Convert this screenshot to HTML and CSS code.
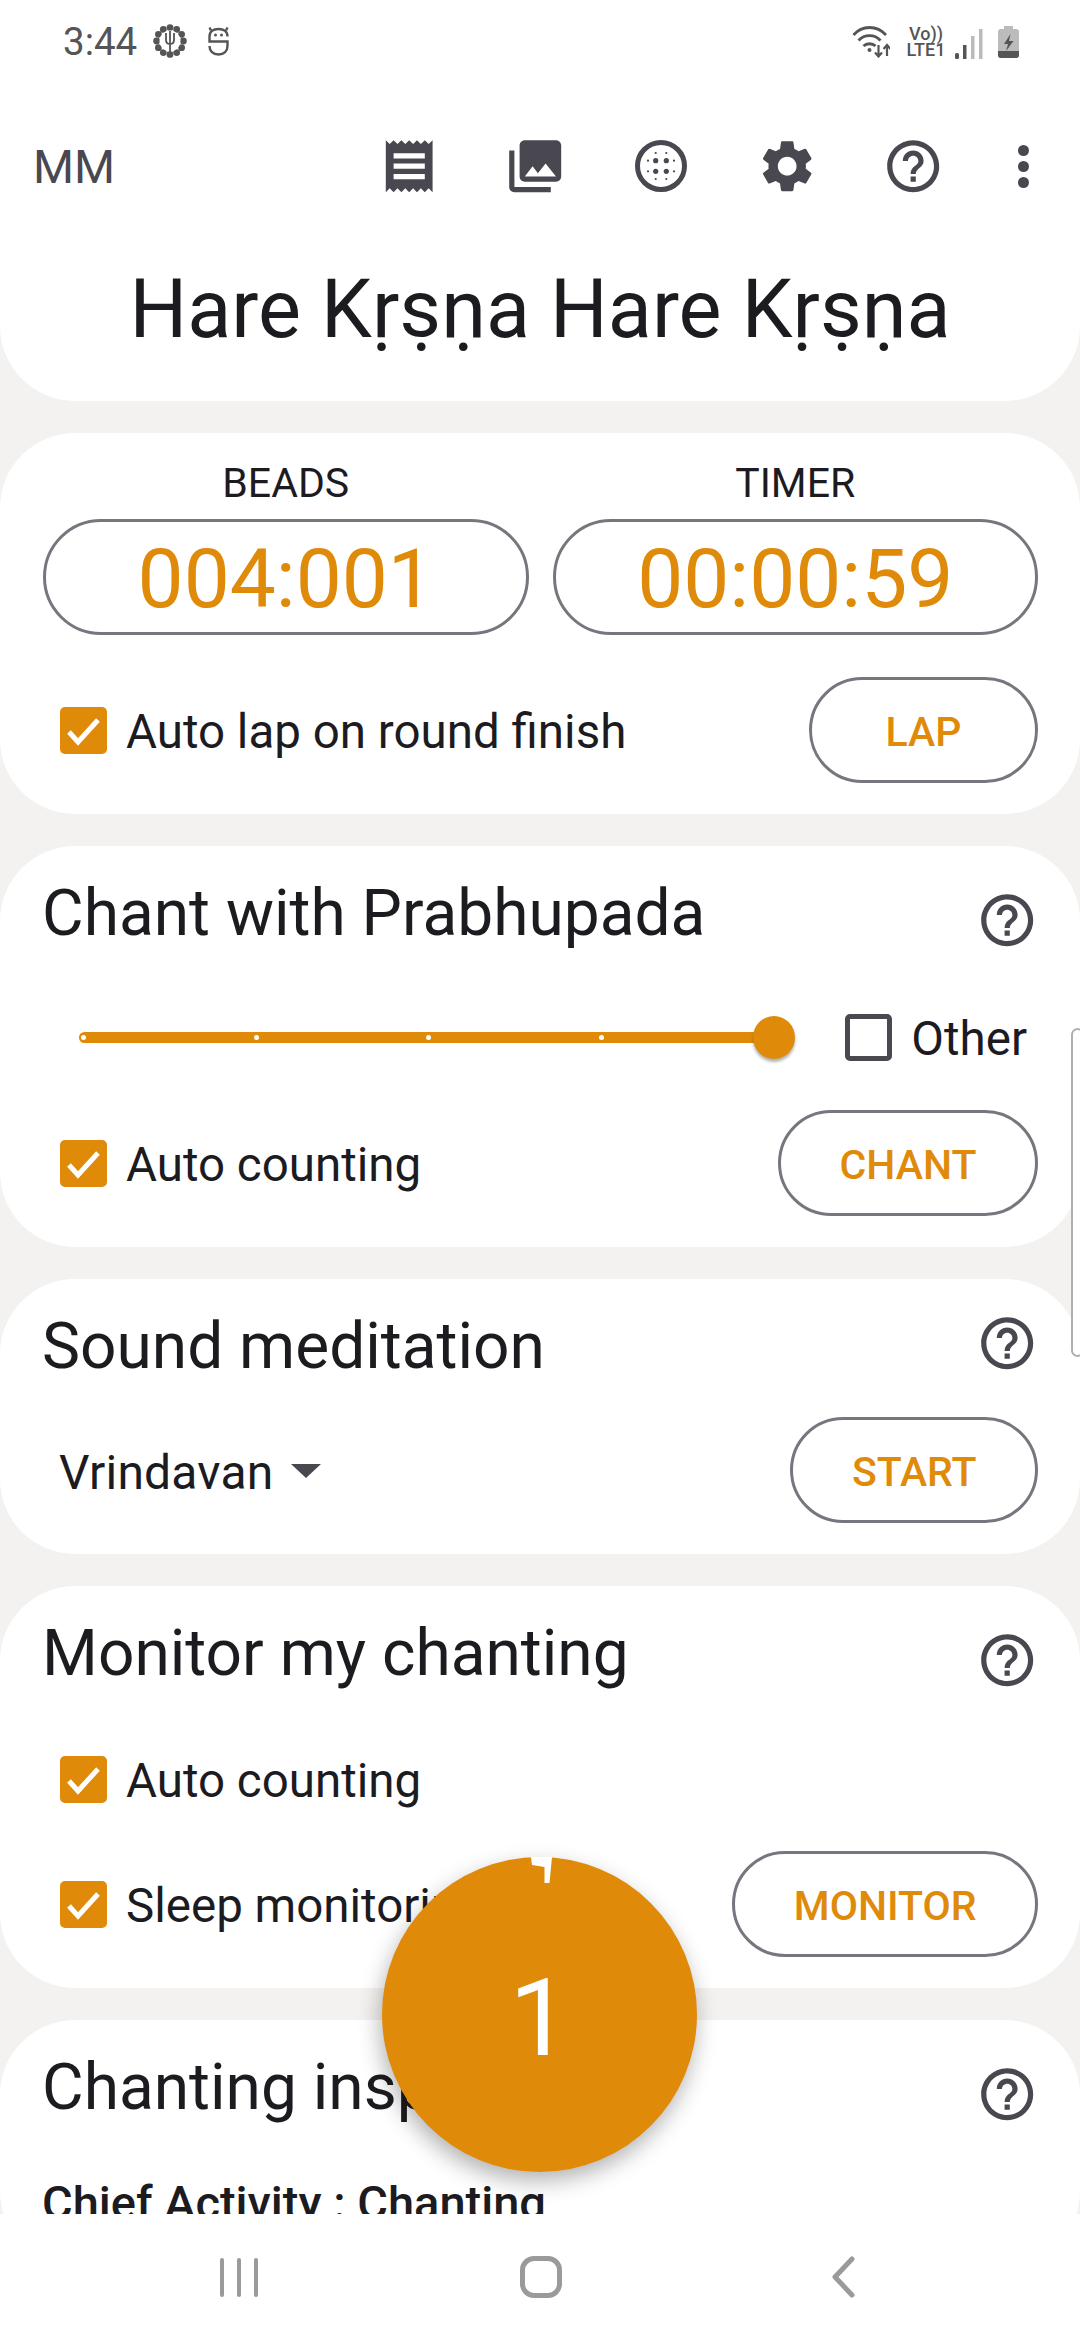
FILE: index.html
```html
<!DOCTYPE html>
<html lang="en">
<head>
<meta charset="utf-8">
<title>Japa counter</title>
<link rel="stylesheet" href="styles.css">
</head>
<body>
<svg class="defs" width="0" height="0" aria-hidden="true">
  <symbol id="help" viewBox="0 0 24 24"><path d="M11 18h2v-2h-2v2zm1-16C6.48 2 2 6.48 2 12s4.48 10 10 10 10-4.48 10-10S17.52 2 12 2zm0 18c-4.41 0-8-3.59-8-8s3.59-8 8-8 8 3.59 8 8-3.59 8-8 8zm0-14c-2.21 0-4 1.79-4 4h2c0-1.1.9-2 2-2s2 .9 2 2c0 2-3 1.75-3 5h2c0-2.25 3-2.5 3-5 0-2.21-1.79-4-4-4z"/></symbol>
  <symbol id="tick" viewBox="0 0 47 47"><path d="M9 25l9 10 20-22" fill="none" stroke="#fff" stroke-width="5"/></symbol>
</svg>
<div class="app">
  <header class="head">
    <div class="status">
      <span class="time">3:44</span>
      <svg class="st-beads" width="34" height="34" viewBox="0 0 34 34">
        <g fill="#555"><circle cx="17" cy="3.6" r="3.4"/><circle cx="23.7" cy="5.4" r="3.4"/><circle cx="28.6" cy="10.3" r="3.4"/><circle cx="30.4" cy="17" r="3.4"/><circle cx="28.6" cy="23.7" r="3.4"/><circle cx="23.7" cy="28.6" r="3.4"/><circle cx="17" cy="30.4" r="3.4"/><circle cx="10.3" cy="28.6" r="3.4"/><circle cx="5.4" cy="23.7" r="3.4"/><circle cx="3.6" cy="17" r="3.4"/><circle cx="5.4" cy="10.3" r="3.4"/><circle cx="10.3" cy="5.4" r="3.4"/></g>
        <circle cx="17" cy="17" r="10.500" fill="#fff"/>
        <path d="M13 9v7c0 3 1.800 4 4 4s4-1 4-4V9M17 7v21" fill="none" stroke="#555" stroke-width="1.800"/>
      </svg>
      <svg class="st-face" width="23" height="30" viewBox="0 0 23 30">
        <path d="M20.500 10.500C20.500 5.500 17 3 11.500 3S2.500 5.500 2.500 10.500V15.500H20.500V20C20.500 25 17 28.500 11.500 28.500S2.500 25 2.500 20" fill="none" stroke="#555" stroke-width="2.400"/>
        <path d="M4 4.500L2.500 1.500M19 4.500L20.500 1.500" stroke="#555" stroke-width="2.400"/>
        <circle cx="8.500" cy="9" r="1.500" fill="#555"/><circle cx="14.500" cy="9" r="1.500" fill="#555"/>
      </svg>
      <span class="status-fill"></span>
      <svg class="st-wifi" width="38" height="32" viewBox="0 0 38 32">
        <path d="M1.500 9C10-1 25-1 34 9M6.500 14.500c6-6.500 16-6.500 22 0M11.500 20c3-3 9-3 12 0" fill="none" stroke="#555" stroke-width="2.800"/>
        <circle cx="17.500" cy="24" r="2" fill="#555"/>
        <path d="M26.500 19v11M23 26.500l3.500 4 3.500-4M35 30V19M31.500 23l3.500-4 3.500 4" fill="none" stroke="#555" stroke-width="2.200"/>
      </svg>
      <span class="net"><span>Vo))</span><span>LTE1</span></span>
      <svg class="st-signal" width="28" height="30" viewBox="0 0 28 30">
        <rect x="0" y="24" width="4" height="6" rx="1.500" fill="#555"/>
        <rect x="8" y="16" width="3.500" height="14" fill="#555"/>
        <rect x="16" y="7" width="3.500" height="23" fill="#bbb"/>
        <rect x="24" y="0" width="3.500" height="30" fill="#bbb"/>
      </svg>
      <svg class="st-batt" width="21" height="32" viewBox="0 0 21 32">
        <path d="M6 0h9v3h3c2 0 3 1 3 3v23c0 2-1 3-3 3H3c-2 0-3-1-3-3V6c0-2 1-3 3-3h3z" fill="#bbb"/>
        <path d="M0 25h21v4c0 2-1 3-3 3H3c-2 0-3-1-3-3z" fill="#555"/>
        <path d="M12.500 8L6 18h4l-2 7 7.500-10h-4.500z" fill="#555"/>
      </svg>
    </div>
    <div class="toolbar">
      <span class="mm">MM</span>
      <span class="tool-fill"></span>
      <span class="tool"><svg class="ic" viewBox="0 0 24 24"><path fill-rule="evenodd" d="M18 17H6v-2h12v2zm0-4H6v-2h12v2zm0-4H6V7h12v2zM3 22l1.500-1.500L6 22l1.500-1.500L9 22l1.500-1.500L12 22l1.500-1.500L15 22l1.500-1.500L18 22l1.500-1.500L21 22V2l-1.500 1.500L18 2l-1.500 1.500L15 2l-1.500 1.500L12 2l-1.500 1.500L9 2 7.500 3.500 6 2 4.500 3.500 3 2v20z"/></svg></span>
      <span class="tool"><svg class="ic" viewBox="0 0 24 24"><path d="M22 16V4c0-1.100-.9-2-2-2H8c-1.100 0-2 .9-2 2v12c0 1.100.9 2 2 2h12c1.100 0 2-.9 2-2zm-11-4l2.030 2.710L16 11l4 5H8l3-4zM2 6v14c0 1.100.9 2 2 2h14v-2H4V6H2z"/></svg></span>
      <span class="tool"><svg class="ic-52" viewBox="0 0 52 52">
        <circle cx="26" cy="26" r="23.500" fill="none" stroke="#49474f" stroke-width="5"/>
        <g fill="#49474f"><circle cx="20.700" cy="20.700" r="2.600"/><circle cx="31.300" cy="20.700" r="2.600"/><circle cx="20.700" cy="31.300" r="2.600"/><circle cx="31.300" cy="31.300" r="2.600"/>
        <circle cx="20.700" cy="13" r="1.100"/><circle cx="31.300" cy="13" r="1.100"/><circle cx="20.700" cy="39" r="1.100"/><circle cx="31.300" cy="39" r="1.100"/><circle cx="13" cy="20.700" r="1.100"/><circle cx="39" cy="20.700" r="1.100"/><circle cx="13" cy="31.300" r="1.100"/><circle cx="39" cy="31.300" r="1.100"/></g>
      </svg></span>
      <span class="tool"><svg class="ic" viewBox="0 0 24 24"><path fill-rule="evenodd" d="M19.140 12.940c.04-.3.06-.61.06-.94 0-.32-.02-.64-.07-.94l2.030-1.580c.18-.14.23-.41.12-.61l-1.920-3.320c-.12-.22-.37-.29-.59-.22l-2.390.96c-.5-.38-1.030-.7-1.620-.94l-.36-2.540c-.04-.24-.24-.41-.48-.41h-3.840c-.24 0-.43.17-.47.41l-.36 2.540c-.59.24-1.130.57-1.620.94l-2.390-.96c-.22-.08-.47 0-.59.22L2.740 8.870c-.12.21-.08.47.12.61l2.030 1.580c-.05.3-.09.63-.09.94s.02.64.07.94l-2.030 1.580c-.18.14-.23.41-.12.61l1.920 3.320c.12.22.37.29.59.22l2.390-.96c.5.38 1.030.7 1.620.94l.36 2.540c.05.24.24.41.48.41h3.840c.24 0 .44-.17.47-.41l.36-2.540c.59-.24 1.130-.56 1.620-.94l2.390.96c.22.08.47 0 .59-.22l1.920-3.320c.12-.22.07-.47-.12-.61l-2.010-1.580zM12 15.600c-1.980 0-3.600-1.620-3.600-3.600s1.620-3.600 3.600-3.600 3.600 1.620 3.600 3.600-1.620 3.600-3.600 3.600z"/></svg></span>
      <span class="tool"><svg class="ic"><use href="#help"/></svg></span>
      <span class="tool tool-more"><span class="dots"><i></i><i></i><i></i></span></span>
    </div>
    <h1 class="mantra">Hare Kṛṣṇa Hare Kṛṣṇa</h1>
  </header>

  <main class="scroll">
    <section class="card">
      <div class="labels"><span>BEADS</span><span>TIMER</span></div>
      <div class="pills"><span class="pill">004:001</span><span class="pill">00:00:59</span></div>
      <div class="action act-lap">
        <label class="check"><span class="box on"><svg><use href="#tick"/></svg></span>Auto lap on round finish</label>
        <button class="btn btn-lap">LAP</button>
      </div>
    </section>

    <section class="card">
      <div class="title-row"><h2>Chant with Prabhupada</h2><svg class="ic help"><use href="#help"/></svg></div>
      <div class="slider-row">
        <div class="track"><i></i><i></i><i></i><i></i><b class="thumb"></b></div>
        <label class="check check-other"><span class="box off"></span>Other</label>
      </div>
      <div class="action act-chant">
        <label class="check"><span class="box on"><svg><use href="#tick"/></svg></span>Auto counting</label>
        <button class="btn">CHANT</button>
      </div>
    </section>

    <section class="card">
      <div class="title-row"><h2>Sound meditation</h2><svg class="ic help help-high"><use href="#help"/></svg></div>
      <div class="action act-start">
        <span class="drop">Vrindavan<i class="caret"></i></span>
        <button class="btn">START</button>
      </div>
    </section>

    <section class="card">
      <div class="title-row"><h2>Monitor my chanting</h2><svg class="ic help"><use href="#help"/></svg></div>
      <div class="solo"><label class="check"><span class="box on"><svg><use href="#tick"/></svg></span>Auto counting</label></div>
      <div class="action act-monitor">
        <label class="check"><span class="box on"><svg><use href="#tick"/></svg></span>Sleep monitoring</label>
        <button class="btn">MONITOR</button>
      </div>
    </section>

    <section class="card">
      <div class="title-row"><h2>Chanting inspiration</h2><svg class="ic help"><use href="#help"/></svg></div>
      <p class="quote">Chief Activity : Chanting</p>
    </section>
  </main>

  <nav class="nav">
    <span class="nav-cell"><span class="recents"><i></i><i></i><i></i></span></span>
    <span class="nav-cell"><span class="home"></span></span>
    <span class="nav-cell"><svg width="26" height="42" viewBox="0 0 26 42"><path d="M22 3L5 21l17 18" fill="none" stroke="#9a9a9a" stroke-width="5" stroke-linecap="round" stroke-linejoin="round"/></svg></span>
  </nav>

  <div class="fab">
    <svg class="fab-notch" width="24" height="28" viewBox="0 0 24 28"><path d="M0 0h21l-2.500 26h-5V10L1 8z" fill="#fff"/></svg>
    <span class="fab-num">1</span>
  </div>
  <div class="edge"></div>
</div>
</body>
</html>
```
FILE: styles.css
```css
* { box-sizing: border-box; }
html, body { margin: 0; padding: 0; }
body { font-family: Roboto, "Noto Sans", sans-serif; color: #1c1b1f; background: #f3f2f1; }
.defs { position: absolute; }
.app { position: relative; width: 1080px; height: 2340px; display: flex; flex-direction: column; overflow: hidden; }

.head { background: #fff; height: 401px; flex: none; border-radius: 0 0 75px 75px; }
.status { height: 82px; display: flex; align-items: center; padding: 0 61px 0 63px; color: #555; }
.time { font-size: 38.500px; width: 90px; }
.st-face { margin-left: 20px; }
.status-fill { flex: 1; }
.st-wifi { margin-top: 2px; }
.net { display: flex; flex-direction: column; align-items: center; margin-left: 15px; font-size: 18px; line-height: 16px; font-weight: 500; width: 42px; margin-top: 2px; }
.st-signal { margin-left: 8px; margin-top: 6px; }
.st-batt { margin-left: 15px; margin-top: 1px; }

.toolbar { height: 166px; display: flex; align-items: center; padding: 2px 0 0 33px; color: #49474f; }
.mm { font-size: 47px; }
.tool-fill { flex: 1; }
.tool { width: 126px; height: 100px; display: flex; align-items: center; justify-content: center; }
.tool-more { width: 95px; margin-right: 9px; }
.ic { width: 62.400px; height: 62.400px; fill: #49474f; flex: none; display: block; }
.ic-52 { width: 52px; height: 52px; display: block; }
.dots { display: flex; flex-direction: column; gap: 5px; }
.dots i { width: 11px; height: 11px; border-radius: 50%; background: #49474f; }

.mantra { margin: 0; padding-top: 3px; font-size: 81px; line-height: 118px; font-weight: 400; text-align: center; }

.scroll { flex: 1; min-height: 0; overflow: hidden; padding-top: 32px; display: flex; flex-direction: column; gap: 32px; }
.card { background: #fff; border-radius: 75px; padding: 0 42px 31px 43px; flex: none; }

.labels { height: 86px; display: grid; grid-template-columns: 1fr 1fr; column-gap: 24px; text-align: center; font-size: 41px; align-items: center; padding-top: 14px; }
.pills { display: grid; grid-template-columns: 1fr 1fr; column-gap: 24px; }
.pill { height: 116px; border: 3px solid #77757d; border-radius: 58px; display: flex; align-items: center; justify-content: center; font-size: 82px; padding-top: 4px; color: #e08a0a; }

.action { display: flex; align-items: center; justify-content: space-between; }
.act-lap { margin-top: 42px; }
.act-chant { margin-top: 16px; }
.act-start { margin-top: 4px; }
.act-monitor { margin-top: 13px; }

.check { display: flex; align-items: center; gap: 19px; padding: 4px 0 0 17px; font-size: 47.500px; }
.box { width: 47px; height: 47px; margin-bottom: 4px; border-radius: 5px; flex: none; display: block; }
.box svg { width: 47px; height: 47px; display: block; }
.on { background: #e08a0a; }
.off { border: 5px solid #4a4850; }

.btn { height: 106px; min-width: 229px; padding: 3px 58.500px 0; border: 3px solid #77757d; border-radius: 53px; background: #fff; color: #e08a0a; font: 500 41px Roboto, sans-serif; }

.title-row { height: 134px; display: flex; justify-content: space-between; align-items: flex-start; }
h2 { margin: 0 0 0 -1px; font-size: 64px; font-weight: 400; line-height: 135px; }
.help { margin-top: 43px; }
.help-high { margin-top: 33px; }

.slider-row { height: 114px; display: flex; align-items: center; }
.track { position: relative; margin-left: 36px; width: 695px; height: 11px; border-radius: 6px; background: #e08a0a; display: flex; align-items: center; gap: 167.500px; padding-left: 2px; }
.track i { width: 5px; height: 5px; border-radius: 50%; background: #fff; flex: none; }
.thumb { position: absolute; right: -21px; top: -16px; width: 42px; height: 43px; border-radius: 50%; background: #e08a0a; box-shadow: 0 3px 3px rgba(0,0,0,.3); }
.check-other { margin-left: auto; padding: 4px 11px 0 0; gap: 19px; }

.drop { display: flex; align-items: center; padding: 4px 0 0 16px; font-size: 48px; letter-spacing: .2px; }
.caret { width: 0; height: 0; margin: 0 0 3px 18px; border-left: 15px solid transparent; border-right: 15px solid transparent; border-top: 14px solid #49474f; }

.solo { height: 118px; display: flex; align-items: center; }
.quote { margin: 0 0 0 -1px; font-size: 47px; font-weight: 500; line-height: 64px; padding-top: 17px; }

.nav { height: 126px; flex: none; background: #fff; display: flex; align-items: center; padding-left: 220px; }
.nav-cell { display: flex; align-items: center; justify-content: center; }
.recents { display: flex; gap: 13px; }
.recents i { width: 4px; height: 39px; border-radius: 2px; background: #9a9a9a; }
.home { display: block; width: 42px; height: 42px; margin-left: 262px; border: 5px solid #9a9a9a; border-radius: 14px; }
.nav-cell:last-child { margin-left: 268px; }

.fab { position: absolute; left: 382px; top: 1857px; width: 315px; height: 315px; border-radius: 50%; background: #e08a0a; color: #fff; font-size: 108px; display: flex; align-items: center; justify-content: center; box-shadow: -2px 9px 22px rgba(0,0,0,.3); }
.fab-num { margin-top: 6px; }
.fab-notch { position: absolute; left: 149px; top: 0; }
.edge { position: absolute; right: -4px; top: 1028px; width: 13px; height: 329px; border: 2.500px solid #b0b0b0; border-radius: 8px; background: #fff; }
```
